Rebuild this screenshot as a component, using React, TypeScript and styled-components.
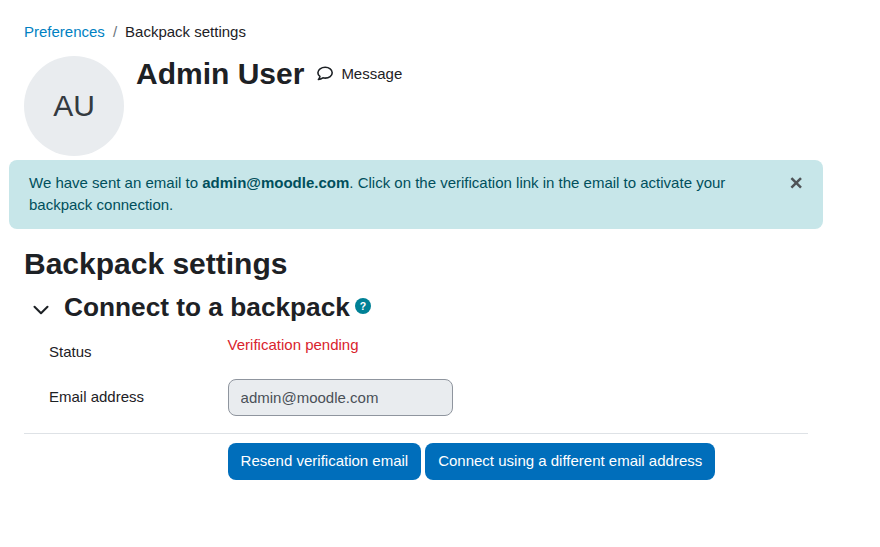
import styled, { createGlobalStyle } from "styled-components";
import { ChevronDown } from "lucide-react";

const GlobalStyle = createGlobalStyle`
  html, body {
    margin: 0;
    padding: 0;
    background: #ffffff;
  }
  body {
    font-family: "Liberation Sans", Arial, sans-serif;
    font-size: 15px;
    line-height: 22.5px;
    color: #1d2125;
  }
  * {
    box-sizing: border-box;
  }
`;

const Page = styled.div`
  width: 880px;
  height: 547px;
  overflow: hidden;
  padding-top: 21px;
`;

const Breadcrumb = styled.nav`
  display: flex;
  align-items: center;
  height: 23px;
  margin: 0 0 12px 24px;
  & a {
    color: #0081c2;
    text-decoration: none;
  }
  & span {
    color: #6a737b;
    padding: 0 8px;
  }
`;

const ProfileHeader = styled.header`
  display: flex;
  align-items: flex-start;
  height: 104px;
  padding-left: 24px;
`;

const Avatar = styled.div`
  width: 100px;
  height: 100px;
  border-radius: 50%;
  background: #e9ecef;
  color: #343a40;
  font-size: 30px;
  display: flex;
  align-items: center;
  justify-content: center;
  margin-right: 12px;
  flex: none;
`;

const UserName = styled.h1`
  margin: 0;
  font-size: 30px;
  line-height: 36px;
  font-weight: 700;
`;

const MessageLink = styled.a`
  display: flex;
  align-items: center;
  height: 36px;
  margin-left: 13px;
  color: #1d2125;
  & svg {
    margin-right: 8px;
  }
`;

const Alert = styled.div`
  position: relative;
  width: 814px;
  height: 69px;
  margin-left: 9px;
  padding: 12px 20px;
  background: #c7e6e9;
  color: #004f5c;
  border-radius: 8px;
  line-height: 22px;
  & b {
    font-weight: 700;
  }
`;

const CloseButton = styled.span`
  position: absolute;
  top: 16px;
  right: 20px;
  width: 14px;
  height: 14px;
  display: flex;
  & svg {
    display: block;
  }
`;

const Content = styled.main`
  padding: 0 72px 0 24px;
`;

const PageTitle = styled.h2`
  margin: 17px 0 0;
  font-size: 30px;
  line-height: 36px;
  font-weight: 700;
`;

const SectionHeading = styled.div`
  display: flex;
  align-items: center;
  height: 36px;
  margin-top: 7px;
  padding-left: 4px;
  & svg.chevron {
    margin: 6px 10px 0 0;
  }
`;

const SectionTitle = styled.h3`
  margin: 0;
  font-size: 26.25px;
  line-height: 31px;
  font-weight: 700;
`;

const HelpIcon = styled.span`
  display: flex;
  margin: 0 0 3px 5px;
`;

const FormRow = styled.div<{ $height: number }>`
  display: grid;
  grid-template-columns: 203.6px 1fr;
  height: ${(p) => p.$height}px;
`;

const FieldLabel = styled.label<{ $top: number }>`
  padding: ${(p) => p.$top}px 0 0 25px;
`;

const StatusValue = styled.div`
  padding-top: 9px;
  color: #d9232d;
`;

const EmailInput = styled.input`
  display: block;
  width: 225px;
  height: 37px;
  padding: 0 12px;
  margin: 0;
  background: #e9ecef;
  border: 1px solid #8f959e;
  border-radius: 8px;
  color: #495057;
  font: inherit;
`;

const Divider = styled.hr`
  height: 1px;
  margin: 0;
  border: none;
  background: #dee2e6;
`;

const Actions = styled.div`
  display: flex;
  gap: 4px;
  margin: 9px 0 0 203.6px;
`;

const PrimaryButton = styled.button`
  height: 37px;
  padding: 0 13px;
  border: none;
  border-radius: 8px;
  background: #006ebb;
  color: #ffffff;
  font: inherit;
  white-space: nowrap;
`;

export default function App() {
  return (
    <Page>
      <GlobalStyle />
      <Breadcrumb>
        <a href="#">Preferences</a>
        <span>/</span>
        Backpack settings
      </Breadcrumb>

      <ProfileHeader>
        <Avatar>AU</Avatar>
        <UserName>Admin User</UserName>
        <MessageLink>
          <svg width="16" height="16" viewBox="0 0 16 16" fill="none">
            <path
              d="M8.2 1.2c-3.9 0-7.3 2.4-7.3 5.5 0 1.5.8 2.8 2 3.7-.1 1.2-.6 2.3-1.5 3.1 1.8-.1 3.3-.8 4.5-1.7.7.2 1.5.3 2.3.3 3.9 0 7-2.4 7-5.4s-3.1-5.5-7-5.5z"
              stroke="#1d2125"
              strokeWidth="1.6"
              strokeLinejoin="round"
            />
          </svg>
          Message
        </MessageLink>
      </ProfileHeader>

      <Alert>
        We have sent an email to <b>admin@moodle.com</b>. Click on the verification link in the email to activate your
        <br />
        backpack connection.
        <CloseButton>
          <svg width="14" height="14" viewBox="0 0 14 14">
            <path d="M2.4 2.1l9.6 9.6M12 2.1l-9.6 9.6" stroke="#4f5457" strokeWidth="2.5" />
          </svg>
        </CloseButton>
      </Alert>

      <Content>
        <PageTitle>Backpack settings</PageTitle>
        <SectionHeading>
          <ChevronDown className="chevron" size={26} strokeWidth={1.9} color="#1d2125" />
          <SectionTitle>Connect to a backpack</SectionTitle>
          <HelpIcon>
            <svg width="16" height="16" viewBox="0 0 16 16">
              <circle cx="8" cy="8" r="8" fill="#008196" />
              <text
                x="8"
                y="11.5"
                textAnchor="middle"
                fontSize="10.5"
                fontWeight="700"
                fontFamily="Liberation Sans"
                fill="#ffffff"
              >
                ?
              </text>
            </svg>
          </HelpIcon>
        </SectionHeading>

        <FormRow $height={54}>
          <FieldLabel $top={16}>Status</FieldLabel>
          <StatusValue>Verification pending</StatusValue>
        </FormRow>
        <FormRow $height={54}>
          <FieldLabel $top={7}>Email address</FieldLabel>
          <div>
            <EmailInput readOnly value="admin@moodle.com" />
          </div>
        </FormRow>
        <Divider />
        <Actions>
          <PrimaryButton>Resend verification email</PrimaryButton>
          <PrimaryButton>Connect using a different email address</PrimaryButton>
        </Actions>
      </Content>
    </Page>
  );
}
